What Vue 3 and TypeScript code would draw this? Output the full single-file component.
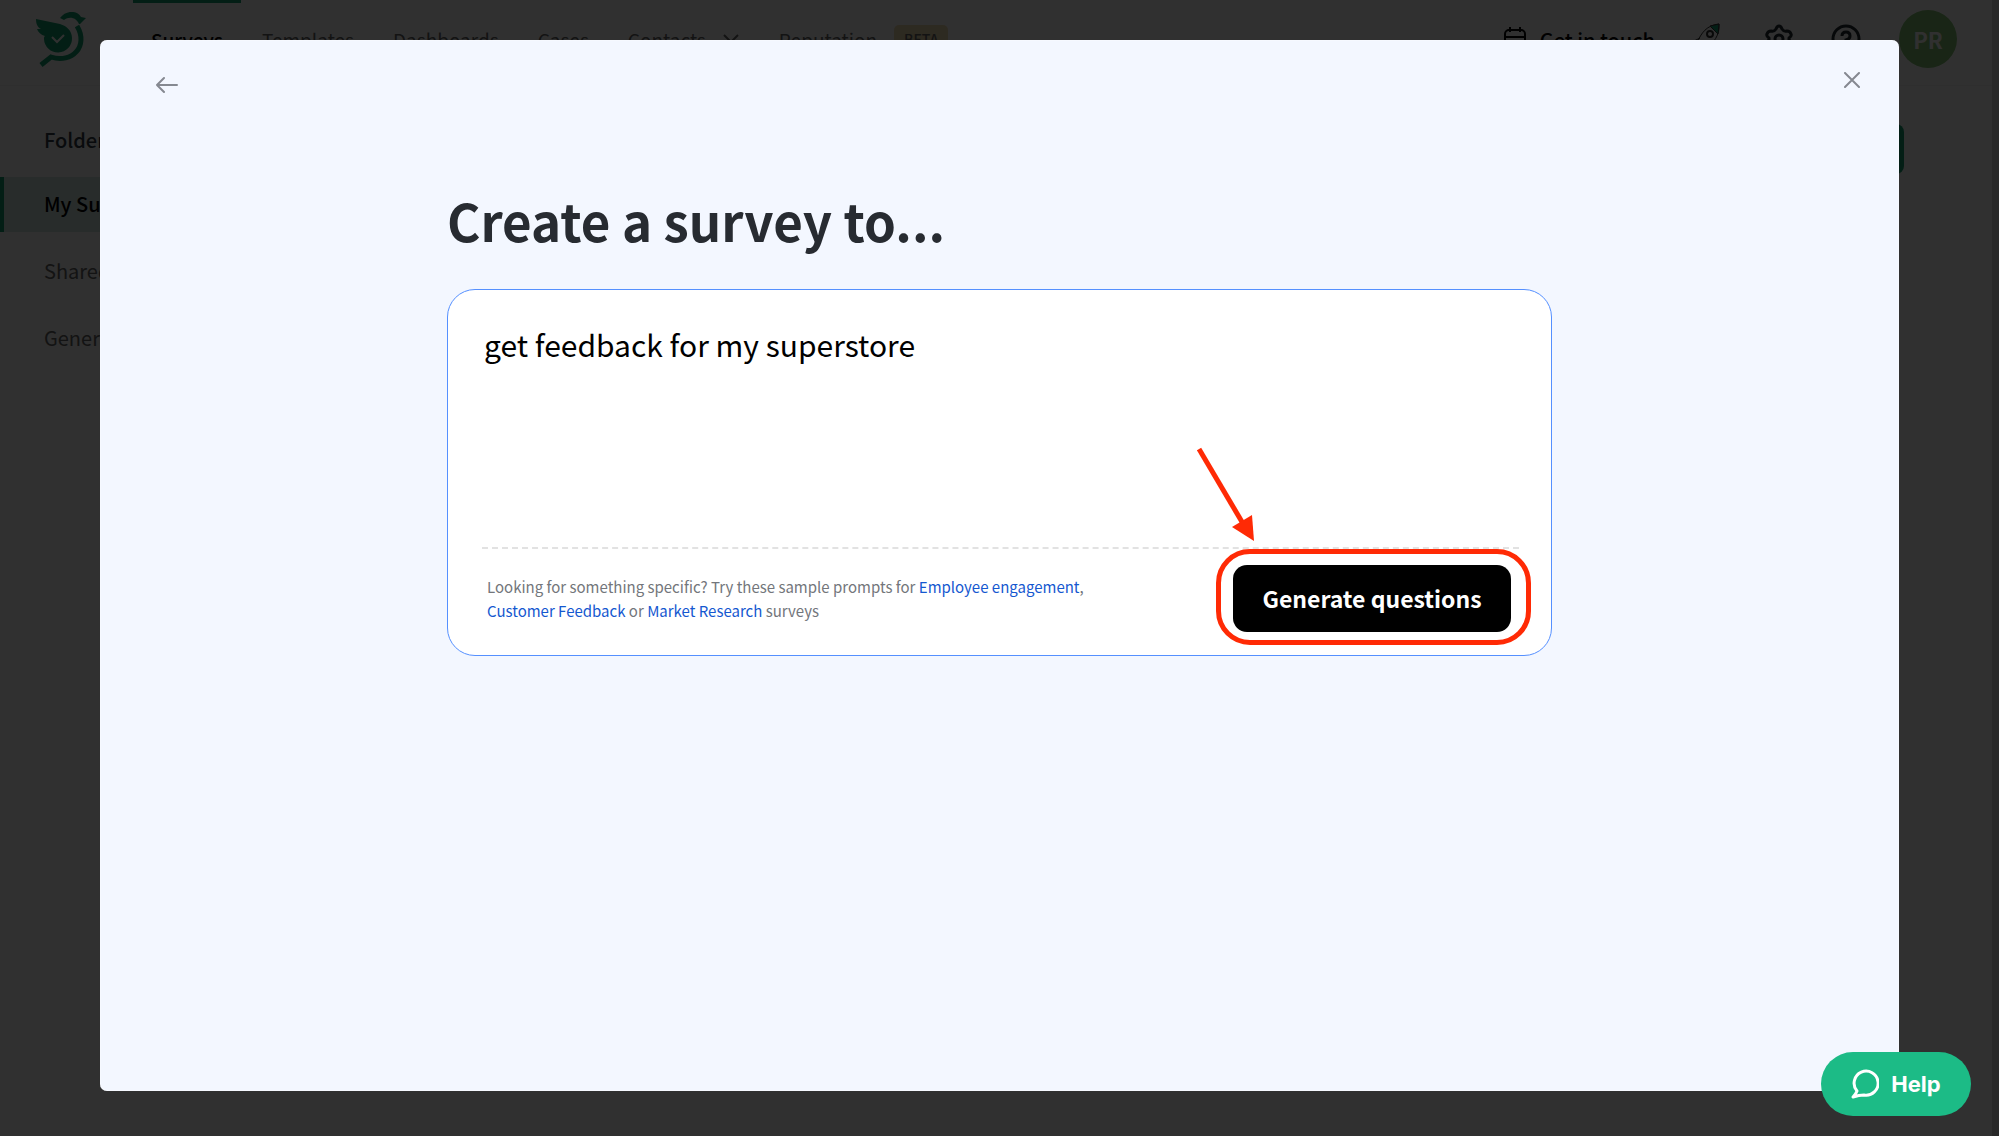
<script setup lang="ts">
import { ref } from 'vue'

const prompt = ref('get feedback for my superstore')
const folders = ['My Surveys', 'Shared Surveys', 'General']
</script>

<template>
  <div class="page">
    <header class="topbar">
      <svg class="logo" viewBox="0 0 50 56" aria-label="Home">
        <path fill="#14a070" d="M0 7 24 12C31 14 36 19 36 26A14 14 0 0 1 8 27C8 25 8 25 9 24C5 23 2 20 1 17L5 17C1 15 0 11 0 7Z" />
        <path fill="#14a070" d="M24 6C30-2 41-2 45 5L50 6 44 12 43 12C40 5 33 4 28 8Z" />
        <path d="M41 14C53 34 36 52 15 45L5 53" fill="none" stroke="#14a070" stroke-width="5" />
        <path d="m16 25 5 5 7-7" fill="none" stroke="#fff" stroke-width="2" />
      </svg>
      <nav class="nav">
        <a href="#" class="active">Surveys</a>
        <a href="#">Templates</a>
        <a href="#">Dashboards</a>
        <a href="#">Cases</a>
        <a href="#">Contacts
          <svg width="17" height="10" viewBox="0 0 17 10"><path d="m1 1 7 7 7-7" fill="none" stroke="currentColor" stroke-width="2" /></svg>
        </a>
        <a href="#">Reputation <span class="beta">BETA</span></a>
      </nav>
      <div class="tools">
        <a href="#" class="touch">
          <svg width="22" height="24" viewBox="0 0 22 24" fill="none" stroke="currentColor" stroke-width="2"><rect x="1" y="3" width="20" height="19" rx="4" /><path d="M1 10h20M6 0v5M16 0v5" /></svg>
          Get in touch
        </a>
        <svg class="rocket" width="28" height="32" viewBox="0 0 28 32" fill="none" stroke="#333" stroke-width="1"><path d="M4 20C8 10 14 2 26 1C27 12 21 20 11 27Z" /><path d="M17 3 26 1 25 11Z" fill="#14a070" /><circle cx="17" cy="11" r="3" stroke-width="2" /><path d="m7 15-6 3M15 25l-3 6" /></svg>
        <svg width="28" height="30" viewBox="0 0 28 30" fill="none" stroke="#222b33" stroke-width="3" stroke-linejoin="round"><path d="M11 5Q12 2 14 2T17 5Q19 8 22 7Q25 7 26 10Q27 12 24 14V16Q27 18 26 20Q25 23 22 23Q19 22 17 25Q16 28 14 28T11 25Q9 22 6 23Q3 23 2 20Q1 18 4 16V14Q1 12 2 10Q3 7 6 7Q9 8 11 5Z" /><circle cx="14" cy="15" r="4" /></svg>
        <svg width="30" height="30" viewBox="0 0 30 30" fill="none" stroke="#222b33" stroke-width="3"><circle cx="15" cy="15" r="13" /><path d="M11 12Q11 8 15 8T19 12Q19 15 15 16v2M15 20v3" /></svg>
        <button class="avatar">PR</button>
      </div>
    </header>
    <div class="body">
      <aside class="sidebar">
        <h2>Folders</h2>
        <a v-for="(folder, i) in folders" :key="folder" href="#" :class="{ current: i === 0 }">{{ folder }}</a>
      </aside>
      <main class="content"><button class="create">Create</button></main>
    </div>
  </div>

  <div class="overlay">
    <section class="modal" role="dialog" aria-modal="true" aria-labelledby="title">
      <div class="modal-bar">
        <button class="icon back" aria-label="Back">
          <svg width="22" height="18" viewBox="0 0 22 18"><path d="M21 9H1M8 2 1 9l7 7" /></svg>
        </button>
        <button class="icon close" aria-label="Close">
          <svg width="16" height="16" viewBox="0 0 16 16"><path d="m1 1 14 14M15 1 1 15" /></svg>
        </button>
      </div>
      <div class="creator">
        <h1 id="title">Create a survey to...</h1>
        <div class="card">
          <textarea v-model="prompt" aria-labelledby="title" spellcheck="false"></textarea>
          <div class="card-foot">
            <p>
              Looking for something specific? Try these sample prompts for <a href="#">Employee engagement</a>,
              <a href="#">Customer Feedback</a> or <a href="#">Market Research</a> surveys
            </p>
            <div class="action">
              <button class="generate">Generate questions</button>
              <svg class="arrow" width="60" height="96" viewBox="0 0 60 96"><path d="m2 2 46 78" stroke="#ff2a05" stroke-width="5" /><path d="M57 94 35 80 55 68Z" fill="#ff2a05" /></svg>
            </div>
          </div>
        </div>
      </div>
    </section>
  </div>

  <button class="help">
    <svg width="28" height="30" viewBox="0 0 28 30"><path d="M6 22A12 12 0 1 1 13 26Q8 26 2 28Q5 25 6 22Z" fill="none" stroke="#fff" stroke-width="3" stroke-linejoin="round" /></svg>
    Help
  </button>
</template>

<style>
body {
  margin: 0;
  overflow: hidden;
}
</style>

<style scoped>
.page,
.overlay {
  font-family: "Noto Sans CJK SC", "Noto Sans", sans-serif;
  box-sizing: border-box;
}
button {
  border: 0;
  padding: 0;
  font: inherit;
  cursor: pointer;
}
a {
  text-decoration: none;
}
.page {
  min-height: 100vh;
  background: #fff;
  border-right: 7px solid #d8d8d8;
  font-size: 19px;
}
.topbar {
  display: flex;
  height: 85px;
  border-bottom: 1px solid #f2f2f2;
  padding: 0 35px 0 36px;
}
.logo {
  width: 50px;
  height: 56px;
  margin-top: 12px;
}
.nav {
  display: flex;
  gap: 3px;
  margin-left: 47px;
}
.nav a {
  display: flex;
  align-items: center;
  gap: 17px;
  height: 72px;
  padding: 0 18px;
  border-top: 3px solid transparent;
  color: #666;
}
.nav a.active {
  border-color: #14a070;
  color: #000;
  font-weight: 500;
}
.beta {
  background: #f0dcb0;
  border-radius: 5px;
  padding: 4px 10px;
  font-size: 14px;
  line-height: 20px;
  font-weight: 500;
}
.tools {
  display: flex;
  align-items: center;
  gap: 38px;
  height: 78px;
  margin-left: auto;
}
.touch {
  display: flex;
  align-items: center;
  gap: 14px;
  color: #000;
  font-size: 20px;
  font-weight: 500;
}
.rocket {
  margin-right: 6px;
}
.avatar {
  width: 58px;
  height: 58px;
  border-radius: 50%;
  background: #84c474;
  color: #fff;
  font-size: 22px;
  font-weight: 700;
}
.body {
  display: flex;
}
.sidebar {
  width: 300px;
  padding-top: 33px;
}
.sidebar h2 {
  margin: 0 0 16px;
  padding-left: 44px;
  font-size: 20px;
  line-height: 42px;
  font-weight: 500;
  color: #333b44;
}
.sidebar a {
  display: block;
  margin-bottom: 12px;
  padding: 0 0 2px 40px;
  border-left: 4px solid transparent;
  font-size: 20px;
  line-height: 53px;
  color: #666;
}
.sidebar a.current {
  border-color: #14a070;
  background: #d2e9e2;
  color: #000;
  font-weight: 500;
}
.content {
  flex: 1;
  display: flex;
  justify-content: flex-end;
  padding: 38px 88px 0;
}
.create {
  width: 180px;
  height: 50px;
  border-radius: 8px;
  background: #14a070;
  color: #fff;
}
.overlay {
  position: fixed;
  inset: 0;
  padding: 40px 5% 45px;
  background: rgba(0, 0, 0, 0.81);
}
.modal {
  box-sizing: border-box;
  height: 100%;
  border-radius: 7px;
  background: #f3f7ff;
  box-shadow: inset 0 0 2px #fff;
}
.modal-bar {
  display: flex;
  justify-content: space-between;
  padding: 32px 39px 0 56px;
}
.icon {
  display: flex;
  background: none;
}
.icon svg {
  fill: none;
  stroke: #858991;
  stroke-width: 2;
  stroke-linecap: round;
  stroke-linejoin: round;
}
.back {
  padding-top: 4px;
}
.creator {
  width: 1105px;
  max-width: 90%;
  margin: 0 auto;
}
h1 {
  margin: 86px 0 29px;
  font-size: 51px;
  line-height: 80px;
  font-weight: 700;
  color: #272b31;
}
.card {
  box-sizing: border-box;
  border: 1px solid #5590ff;
  border-radius: 28px;
  background: #fff;
  padding: 30px 32px 0 34px;
}
textarea {
  display: block;
  box-sizing: border-box;
  width: 100%;
  height: 229px;
  border: 0;
  border-bottom: 2px dashed #e2e2e2;
  outline: 0;
  resize: none;
  padding: 0 2px;
  background: none;
  font: 30px/48px "Noto Sans CJK SC", "Noto Sans", sans-serif;
  color: #000;
}
.card-foot {
  display: flex;
  justify-content: space-between;
  height: 106px;
}
.card-foot p {
  width: 620px;
  margin: 26px 0 0 5px;
  font-size: 15px;
  line-height: 24px;
  color: #73767b;
}
.card-foot a {
  color: #1558d0;
}
.action {
  position: relative;
  align-self: flex-start;
  margin-right: -12px;
  border: 5px solid #ff2a05;
  border-radius: 34px;
  padding: 11px 15px 8px 12px;
}
.generate {
  display: block;
  width: 278px;
  height: 67px;
  border-radius: 14px;
  background: #000;
  color: #fff;
  padding-bottom: 2px;
  font-size: 23px;
  font-weight: 700;
}
.arrow {
  position: absolute;
  left: -24px;
  top: -107px;
}
.help {
  position: fixed;
  right: 28px;
  bottom: 20px;
  display: flex;
  align-items: center;
  justify-content: center;
  gap: 12px;
  width: 150px;
  height: 64px;
  border-radius: 32px;
  background: #1cbb86;
  color: #fff;
  font: 700 22px/32px Inter, sans-serif;
}
</style>
